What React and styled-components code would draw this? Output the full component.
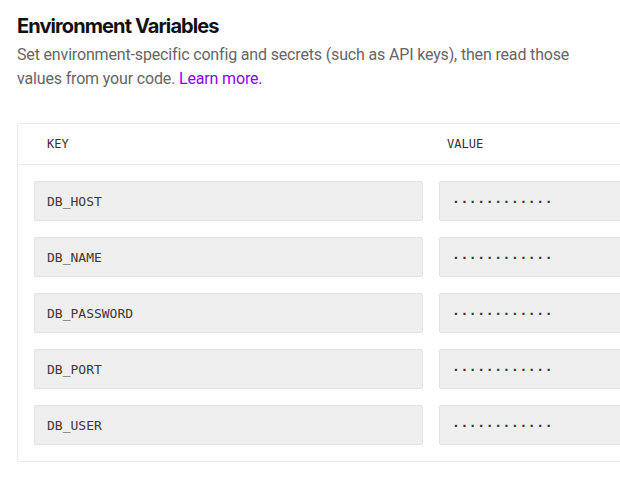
import React from "react";
import styled, { createGlobalStyle } from "styled-components";

const GlobalStyle = createGlobalStyle`
  html, body {
    margin: 0;
    padding: 0;
    background: #fff;
    overflow: hidden;
  }
  body {
    font-family: Roboto, "Liberation Sans", sans-serif;
    -webkit-font-smoothing: antialiased;
  }
`;

const Page = styled.div`
  padding: 14px 0 0 17px;
`;

const Title = styled.h1`
  margin: 0;
  font-family: Inter, "Liberation Sans", sans-serif;
  font-size: 20px;
  line-height: 24px;
  font-weight: 700;
  letter-spacing: -0.045em;
  color: #111;
`;

const Lead = styled.p`
  margin: 5px 0 0;
  width: 570px;
  font-size: 16px;
  line-height: 24px;
  letter-spacing: -0.01em;
  color: #666;
`;

const Link = styled.a`
  color: #8a00ff;
  text-decoration: none;
`;

const Table = styled.div`
  margin-top: 32px;
  width: 828px;
  border: 1px solid #eaeaea;
  border-radius: 2px;
`;

const Head = styled.div`
  display: grid;
  grid-template-columns: 400px 1fr;
  height: 40px;
  align-items: center;
  padding-left: 29px;
  border-bottom: 1px solid #eaeaea;
`;

const HeadCell = styled.span`
  font-family: "DejaVu Sans Mono", "Liberation Mono", monospace;
  font-size: 12px;
  color: #333;
  text-transform: uppercase;
`;

const Body = styled.div`
  display: flex;
  flex-direction: column;
  gap: 16px;
  padding: 16px;
`;

const Row = styled.div`
  display: grid;
  grid-template-columns: 389px 1fr;
  gap: 16px;
`;

const Field = styled.div`
  box-sizing: border-box;
  height: 40px;
  display: flex;
  align-items: center;
  padding: 0 12px;
  background: #efefef;
  border: 1px solid #e3e3e3;
  border-radius: 2px;
  font-family: "DejaVu Sans Mono", "Liberation Mono", monospace;
  font-size: 13px;
  color: #3a3a3a;
  font-weight: ${(p) => (p.$secret ? 700 : 400)};
  letter-spacing: ${(p) => (p.$secret ? "0.6px" : "0")};
`;

const vars = ["DB_HOST", "DB_NAME", "DB_PASSWORD", "DB_PORT", "DB_USER"];

export default function App() {
  return (
    <>
      <GlobalStyle />
      <Page>
        <Title>Environment Variables</Title>
        <Lead>
          Set environment-specific config and secrets (such as API keys), then
          read those values from your code. <Link href="#">Learn more.</Link>
        </Lead>
        <Table>
          <Head>
            <HeadCell>Key</HeadCell>
            <HeadCell>Value</HeadCell>
          </Head>
          <Body>
            {vars.map((name) => (
              <Row key={name}>
                <Field>{name}</Field>
                <Field $secret>{"·".repeat(12)}</Field>
              </Row>
            ))}
          </Body>
        </Table>
      </Page>
    </>
  );
}
